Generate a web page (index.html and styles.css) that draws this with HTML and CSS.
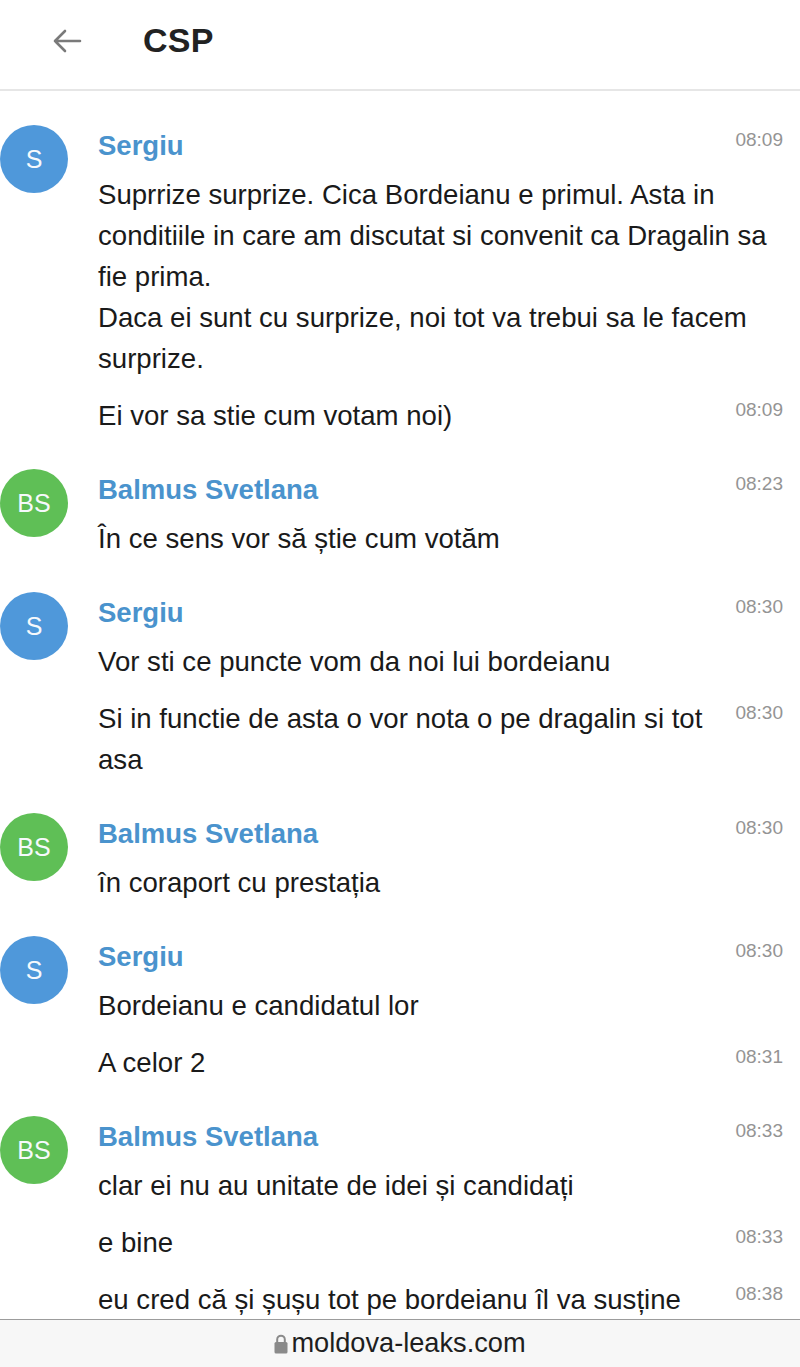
FILE: index.html
```html
<!DOCTYPE html>
<html lang="ro">
<head>
<meta charset="utf-8">
<title>CSP</title>
<link rel="stylesheet" href="styles.css">
</head>
<body>
<div class="screen">
  <header class="topbar">
    <span class="back">
      <svg width="30" height="24" viewBox="0 0 30 24"><path d="M28 12H3M13 2L3 12l10 10" fill="none" stroke="#7a7a7a" stroke-width="2.6" stroke-linecap="round" stroke-linejoin="round"/></svg>
    </span>
    <h1 class="title">CSP</h1>
  </header>

  <main class="feed">
    <section class="group">
      <div class="avatar blue">S</div>
      <div class="body">
        <div class="head"><span class="name">Sergiu</span><span class="time">08:09</span></div>
        <p class="msg">Suprrize surprize. Cica Bordeianu e primul. Asta in conditiile in care am discutat si convenit ca Dragalin sa fie prima.<br>Daca ei sunt cu surprize, noi tot va trebui sa le facem surprize.</p>
        <div class="row"><p class="msg">Ei vor sa stie cum votam noi)</p><span class="time">08:09</span></div>
      </div>
    </section>

    <section class="group">
      <div class="avatar green">BS</div>
      <div class="body">
        <div class="head"><span class="name">Balmus Svetlana</span><span class="time">08:23</span></div>
        <p class="msg">În ce sens vor să știe cum votăm</p>
      </div>
    </section>

    <section class="group">
      <div class="avatar blue">S</div>
      <div class="body">
        <div class="head"><span class="name">Sergiu</span><span class="time">08:30</span></div>
        <p class="msg">Vor sti ce puncte vom da noi lui bordeianu</p>
        <div class="row"><p class="msg">Si in functie de asta o vor nota o pe dragalin si tot asa</p><span class="time">08:30</span></div>
      </div>
    </section>

    <section class="group">
      <div class="avatar green">BS</div>
      <div class="body">
        <div class="head"><span class="name">Balmus Svetlana</span><span class="time">08:30</span></div>
        <p class="msg">în coraport cu prestația</p>
      </div>
    </section>

    <section class="group">
      <div class="avatar blue">S</div>
      <div class="body">
        <div class="head"><span class="name">Sergiu</span><span class="time">08:30</span></div>
        <p class="msg">Bordeianu e candidatul lor</p>
        <div class="row"><p class="msg">A celor 2</p><span class="time">08:31</span></div>
      </div>
    </section>

    <section class="group">
      <div class="avatar green">BS</div>
      <div class="body">
        <div class="head"><span class="name">Balmus Svetlana</span><span class="time">08:33</span></div>
        <p class="msg">clar ei nu au unitate de idei și candidați</p>
        <div class="row"><p class="msg">e bine</p><span class="time">08:33</span></div>
        <div class="row"><p class="msg">eu cred că și șușu tot pe bordeianu îl va susține</p><span class="time">08:38</span></div>
      </div>
    </section>
  </main>

  <footer class="urlbar">
    <svg class="lock" width="14" height="21" viewBox="0 0 14 21"><path d="M3.2 10V6.5a3.8 3.8 0 0 1 7.6 0V10" fill="none" stroke="#8a8a8a" stroke-width="2"/><rect x="0.5" y="9" width="13" height="11.5" rx="1.5" fill="#8a8a8a"/></svg>
    <span class="url">moldova-leaks.com</span>
  </footer>
</div>
</body>
</html>
```

FILE: styles.css
```css
* { box-sizing: border-box; }

html, body {
  margin: 0;
  padding: 0;
  background: #ffffff;
}

body {
  font-family: "Liberation Sans", Arial, sans-serif;
  color: #1a1a1a;
}

.screen {
  width: 800px;
  height: 1367px;
  display: flex;
  flex-direction: column;
  overflow: hidden;
}

/* top bar */
.topbar {
  height: 91px;
  flex: none;
  display: flex;
  align-items: center;
  border-bottom: 2px solid #e6e6e6;
  padding-bottom: 8px;
}

.back {
  width: 30px;
  margin-left: 52px;
  display: flex;
  align-items: center;
}

.title {
  margin: 0 0 0 61px;
  font-size: 34px;
  font-weight: bold;
  color: #222;
  letter-spacing: 0.2px;
}

/* message feed */
.feed {
  flex: 1;
  overflow: hidden;
  padding: 34px 17px 0 0;
  display: flex;
  flex-direction: column;
  gap: 33px;
}

.group {
  display: flex;
  gap: 30px;
}

.avatar {
  flex: none;
  width: 68px;
  height: 68px;
  border-radius: 50%;
  color: #f6f9fc;
  font-size: 25px;
  display: flex;
  align-items: center;
  justify-content: center;
}

.avatar.blue { background: #4f98da; }
.avatar.green { background: #5fbf56; }

.body {
  flex: 1;
  display: flex;
  flex-direction: column;
  gap: 16px;
  min-width: 0;
}

.head {
  display: flex;
  justify-content: space-between;
  align-items: flex-start;
  height: 41px;
  margin-bottom: -8px;
}

.name {
  font-size: 27.5px;
  font-weight: bold;
  line-height: 41px;
  color: #4a93cd;
}

.time {
  flex: none;
  font-size: 19px;
  line-height: 30px;
  color: #949494;
}

.msg {
  margin: 0;
  font-size: 27.6px;
  line-height: 41px;
}

.row {
  display: flex;
  justify-content: space-between;
  align-items: flex-start;
  gap: 20px;
}

.row .msg { flex: 1; }

/* address bar */
.urlbar {
  height: 48px;
  flex: none;
  background: #f7f7f7;
  border-top: 1.5px solid #9c9c9c;
  display: flex;
  align-items: center;
  justify-content: center;
  gap: 3px;
  padding-bottom: 2px;
}

.lock { display: block; margin-top: 2px; }

.url {
  font-size: 27.2px;
  color: #1e1e1e;
}
```
